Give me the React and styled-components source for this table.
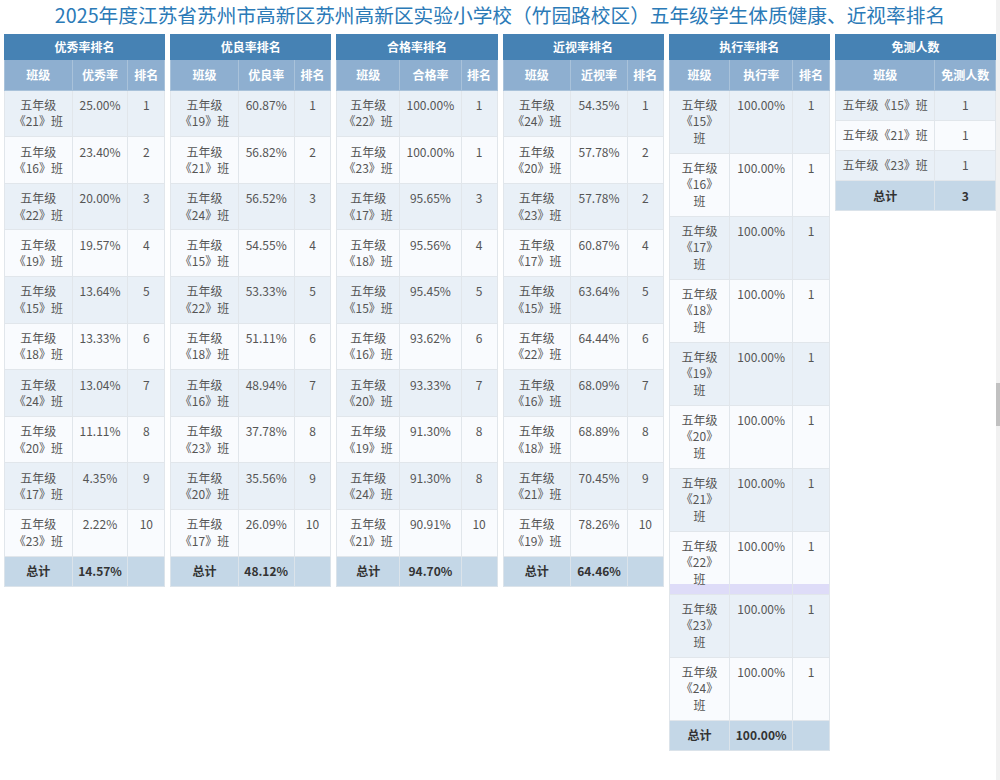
import React from "react";
import styled, { createGlobalStyle, css } from "styled-components";

const GlobalStyle = createGlobalStyle`
  html, body { margin: 0; padding: 0; background: #ffffff; }
  body { font-family: "Microsoft YaHei", "Noto Sans CJK SC", "Noto Sans", sans-serif; }
`;

const Page = styled.div`
  width: 1000px;
  padding: 1px 4px 0;
  box-sizing: border-box;
`;

const Title = styled.h1`
  margin: 0;
  font-size: 19.7px;
  line-height: 28px;
  font-weight: 400;
  color: #2b7ab7;
  text-align: center;
  white-space: nowrap;
`;

const Boards = styled.div`
  display: flex;
  align-items: flex-start;
  gap: 5px;
  margin-top: 5px;
`;

const Table = styled.table`
  flex: 1 1 0;
  min-width: 0;
  border-collapse: collapse;
  table-layout: fixed;
  border: 1px solid #e2e6ea;
  font-size: 12px;
  line-height: 16.4px;
`;

const Caption = styled.th`
  background: #4682b4;
  color: #ffffff;
  font-weight: 700;
  padding: 4px 0;
  text-align: center;
  border: 1px solid #4682b4;
`;

const HeadCell = styled.th`
  background: #8eafd0;
  color: #ffffff;
  font-weight: 700;
  padding: 6.4px 0;
  text-align: center;
  border: 1px solid #a9c2da;
  white-space: nowrap;
`;

const Row = styled.tr`
  background: ${(p) => (p.$odd ? "#e9f0f7" : "#f9fbfe")};
  ${(p) =>
    p.$mark &&
    css`
      background: linear-gradient(
        to bottom,
        #f9fbfe 0,
        #f9fbfe calc(100% - 10px),
        #dedcf8 calc(100% - 10px)
      );
    `}
`;

const Cell = styled.td`
  color: #555555;
  text-align: center;
  vertical-align: top;
  padding: 6.4px 0;
  border: 1px solid #e1e6eb;
  white-space: nowrap;
`;

const FootRow = styled.tr`
  background: #c4d7e7;
`;

const FootCell = styled.td`
  color: #333333;
  font-weight: 700;
  text-align: center;
  padding: 6.4px 0;
  border: 1px solid #dbe3ea;
`;

const Line = styled.span`
  display: ${(p) => (p.$block ? "block" : "inline")};
`;

const ScrollTrack = styled.div`
  position: fixed;
  top: 0;
  right: 0;
  width: 4px;
  height: 100%;
  background: #f1f1f1;
`;

const ScrollThumb = styled.div`
  position: absolute;
  top: 383px;
  left: 0;
  width: 4px;
  height: 43px;
  background: #c1c1c1;
`;

function ClassName({ n, lines }) {
  if (lines === 1) return <span>五年级《{n}》班</span>;
  if (lines === 2)
    return (
      <>
        <Line $block>五年级</Line>
        <Line $block>《{n}》班</Line>
      </>
    );
  return (
    <>
      <Line $block>五年级</Line>
      <Line $block>《{n}》</Line>
      <Line $block>班</Line>
    </>
  );
}

const boards = [
  {
    title: "优秀率排名",
    metric: "优秀率",
    widths: [68, 56, 37],
    total: "14.57%",
    rows: [
      [21, "25.00%", 1], [16, "23.40%", 2], [22, "20.00%", 3], [19, "19.57%", 4],
      [15, "13.64%", 5], [18, "13.33%", 6], [24, "13.04%", 7], [20, "11.11%", 8],
      [17, "4.35%", 9], [23, "2.22%", 10],
    ],
  },
  {
    title: "优良率排名",
    metric: "优良率",
    widths: [68, 56, 37],
    total: "48.12%",
    rows: [
      [19, "60.87%", 1], [21, "56.82%", 2], [24, "56.52%", 3], [15, "54.55%", 4],
      [22, "53.33%", 5], [18, "51.11%", 6], [16, "48.94%", 7], [23, "37.78%", 8],
      [20, "35.56%", 9], [17, "26.09%", 10],
    ],
  },
  {
    title: "合格率排名",
    metric: "合格率",
    widths: [63, 62, 36],
    total: "94.70%",
    rows: [
      [22, "100.00%", 1], [23, "100.00%", 1], [17, "95.65%", 3], [18, "95.56%", 4],
      [15, "95.45%", 5], [16, "93.62%", 6], [20, "93.33%", 7], [19, "91.30%", 8],
      [24, "91.30%", 8], [21, "90.91%", 10],
    ],
  },
  {
    title: "近视率排名",
    metric: "近视率",
    widths: [68, 57, 36],
    total: "64.46%",
    rows: [
      [24, "54.35%", 1], [20, "57.78%", 2], [23, "57.78%", 2], [17, "60.87%", 4],
      [15, "63.64%", 5], [22, "64.44%", 6], [16, "68.09%", 7], [18, "68.89%", 8],
      [21, "70.45%", 9], [19, "78.26%", 10],
    ],
  },
  {
    title: "执行率排名",
    metric: "执行率",
    widths: [61, 63, 37],
    total: "100.00%",
    lines: 3,
    mark: 22,
    rows: [15, 16, 17, 18, 19, 20, 21, 22, 23, 24].map((n) => [n, "100.00%", 1]),
  },
];

function RankBoard({ b }) {
  return (
    <Table>
      <colgroup>
        {b.widths.map((w, i) => (
          <col key={i} style={{ width: w }} />
        ))}
      </colgroup>
      <thead>
        <tr>
          <Caption colSpan={3}>{b.title}</Caption>
        </tr>
        <tr>
          <HeadCell>班级</HeadCell>
          <HeadCell>{b.metric}</HeadCell>
          <HeadCell>排名</HeadCell>
        </tr>
      </thead>
      <tbody>
        {b.rows.map(([n, v, r], i) => (
          <Row key={n} $odd={i % 2 === 0} $mark={b.mark === n}>
            <Cell>
              <ClassName n={n} lines={b.lines || 2} />
            </Cell>
            <Cell>{v}</Cell>
            <Cell>{r}</Cell>
          </Row>
        ))}
        <FootRow>
          <FootCell>总计</FootCell>
          <FootCell>{b.total}</FootCell>
          <FootCell />
        </FootRow>
      </tbody>
    </Table>
  );
}

function ExemptBoard() {
  const rows = [15, 21, 23];
  return (
    <Table>
      <colgroup>
        <col style={{ width: 100 }} />
        <col style={{ width: 61 }} />
      </colgroup>
      <thead>
        <tr>
          <Caption colSpan={2}>免测人数</Caption>
        </tr>
        <tr>
          <HeadCell>班级</HeadCell>
          <HeadCell>免测人数</HeadCell>
        </tr>
      </thead>
      <tbody>
        {rows.map((n, i) => (
          <Row key={n} $odd={i % 2 === 0}>
            <Cell>
              <ClassName n={n} lines={1} />
            </Cell>
            <Cell>1</Cell>
          </Row>
        ))}
        <FootRow>
          <FootCell>总计</FootCell>
          <FootCell>3</FootCell>
        </FootRow>
      </tbody>
    </Table>
  );
}

export default function App() {
  return (
    <>
      <GlobalStyle />
      <Page>
        <Title>2025年度江苏省苏州市高新区苏州高新区实验小学校（竹园路校区）五年级学生体质健康、近视率排名</Title>
        <Boards>
          {boards.map((b) => (
            <RankBoard key={b.title} b={b} />
          ))}
          <ExemptBoard />
        </Boards>
      </Page>
      <ScrollTrack>
        <ScrollThumb />
      </ScrollTrack>
    </>
  );
}
